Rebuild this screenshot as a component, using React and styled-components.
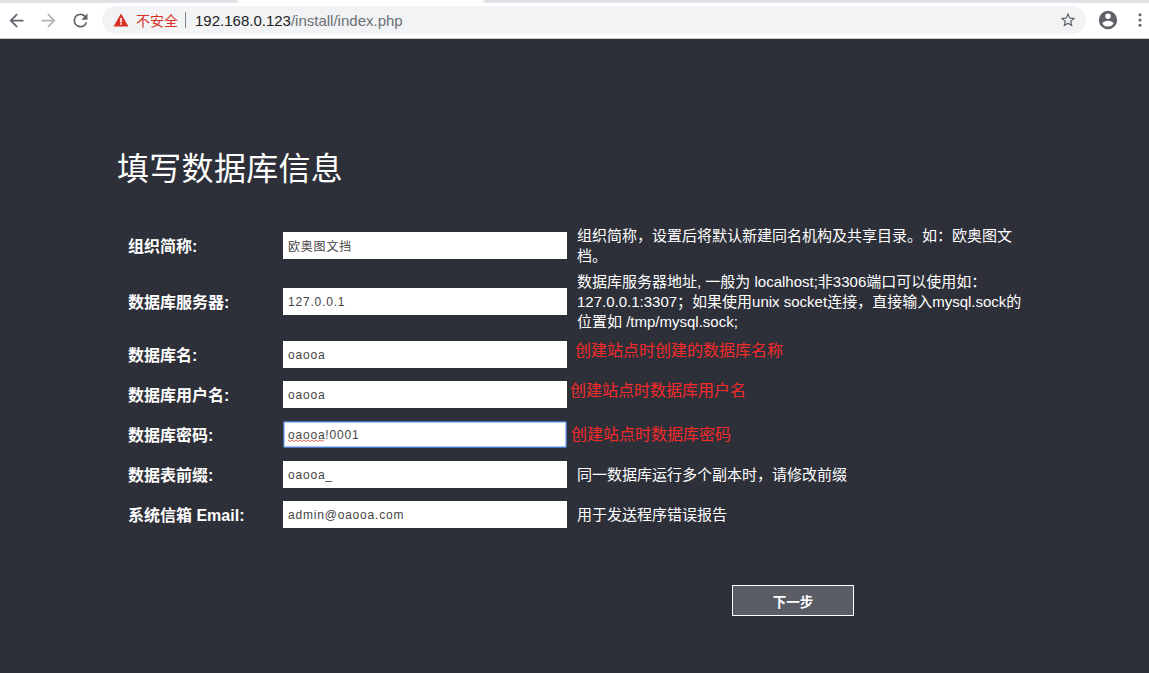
import React from "react";
import styled, { createGlobalStyle } from "styled-components";

const cjk = `"Liberation Sans", "Noto Sans CJK SC", sans-serif`;

const GlobalStyle = createGlobalStyle`
  html, body {
    margin: 0;
    padding: 0;
    height: 100%;
    background: #2e3039;
  }
  #root {
    height: 100%;
  }
`;

const Page = styled.div`
  width: 1149px;
  height: 673px;
  overflow: hidden;
  font-family: ${cjk};
  background: #2e3039;
`;

const TopStrip = styled.div`
  height: 3px;
  background: linear-gradient(
    to right,
    #dee1e6 0,
    #dee1e6 237px,
    #fff 239px,
    #fff 482px,
    #dee1e6 485px
  );
`;

const Toolbar = styled.div`
  height: 36px;
  background: #fff;
  border-bottom: 1px solid #c8cacd;
  box-sizing: border-box;
  display: flex;
  align-items: center;
  padding: 0 0 1px 4px;
`;

const NavButton = styled.div`
  flex: none;
  width: 24px;
  height: 24px;
  margin-left: ${(p) => p.$left || 0}px;
  display: flex;
  align-items: center;
  justify-content: center;
  color: ${(p) => p.$color || "#5f6368"};
`;

const Omnibox = styled.div`
  flex: none;
  width: 984px;
  height: 28px;
  margin-left: 10px;
  border-radius: 14px;
  background: #f1f3f4;
  display: flex;
  align-items: center;
  padding: 0 9px 0 11px;
  box-sizing: border-box;
`;

const NotSecure = styled.span`
  color: #d93025;
  font-size: 14px;
  margin-left: 7px;
`;

const Divider = styled.span`
  width: 1px;
  height: 16px;
  background: #80868b;
  margin: 0 9px 0 7px;
`;

const UrlHost = styled.span`
  color: #202124;
  font-size: 15px;
`;

const UrlPath = styled.span`
  color: #6b7074;
  font-size: 15px;
  flex: 1;
`;

const Main = styled.main`
  padding: 111px 0 0 118px;
`;

const Title = styled.h1`
  margin: 0 0 0 -1px;
  color: #fff;
  font-size: 32px;
  font-weight: 400;
  line-height: 38px;
  letter-spacing: 0.3px;
`;

const Form = styled.form`
  margin-top: 34px;
  display: flex;
  flex-direction: column;
`;

const Row = styled.div`
  display: flex;
  align-items: center;
  min-height: 40px;
  padding-left: 10px;
`;

const Label = styled.label`
  width: 155px;
  flex: none;
  color: #fff;
  font-size: 16px;
  font-weight: 700;
`;

const FieldWrap = styled.div`
  position: relative;
  flex: none;
  width: 284px;
  height: 27px;
`;

const Field = styled.input`
  display: block;
  width: 100%;
  height: 100%;
  box-sizing: border-box;
  border: ${(p) => (p.$focused ? "1px solid #4a78c8" : "none")};
  box-shadow: ${(p) => (p.$focused ? "inset 0 0 0 1px rgba(74, 120, 200, 0.45)" : "none")};
  border-radius: ${(p) => (p.$focused ? "2px" : "0")};
  padding: 1px ${(p) => (p.$focused ? "4px" : "5px")} 0;
  background: #fff;
  color: #444;
  font-family: ${cjk};
  font-size: 12px;
  letter-spacing: 0.8px;
  outline: none;
`;

const Squiggle = styled.svg`
  position: absolute;
  left: 5px;
  top: 18px;
`;

const Hint = styled.div`
  width: 446px;
  margin-left: 10px;
  padding: 4px 0 2px;
  color: #fff;
  font-size: 15px;
  line-height: 20px;
`;

const RedHint = styled.div`
  margin-left: ${(p) => p.$offset}px;
  margin-bottom: ${(p) => p.$lift}px;
  color: #f52a2a;
  font-size: 16px;
  line-height: 20px;
`;

const Actions = styled.div`
  display: flex;
  padding: 51px 0 0 614px;
`;

const NextButton = styled.button`
  width: 122px;
  height: 31px;
  background: #5a5d65;
  border: 1px solid #fff;
  color: #fff;
  font-family: ${cjk};
  font-size: 13.5px;
  font-weight: 700;
  padding: 0;
`;

const fields = [
  { label: "组织简称:", value: "欧奥图文挡", hint: "组织简称，设置后将默认新建同名机构及共享目录。如：欧奥图文档。" },
  {
    label: "数据库服务器:",
    value: "127.0.0.1",
    hint: "数据库服务器地址, 一般为 localhost;非3306端口可以使用如：127.0.0.1:3307；如果使用unix socket连接，直接输入mysql.sock的位置如 /tmp/mysql.sock;",
  },
  { label: "数据库名:", value: "oaooa", red: "创建站点时创建的数据库名称", offset: 8, lift: 6 },
  { label: "数据库用户名:", value: "oaooa", red: "创建站点时数据库用户名", offset: 3, lift: 6 },
  { label: "数据库密码:", value: "oaooa!0001", red: "创建站点时数据库密码", offset: 4, lift: -2, focused: true },
  { label: "数据表前缀:", value: "oaooa_", hint: "同一数据库运行多个副本时，请修改前缀" },
  { label: "系统信箱 Email:", value: "admin@oaooa.com", hint: "用于发送程序错误报告" },
];

export default function App() {
  return (
    <Page>
      <GlobalStyle />
      <TopStrip />
      <Toolbar>
        <NavButton>
          <svg width="21" height="21" viewBox="0 0 24 24" fill="currentColor">
            <path d="M20 11H7.83l5.59-5.59L12 4l-8 8 8 8 1.41-1.41L7.83 13H20v-2z" />
          </svg>
        </NavButton>
        <NavButton $left={8} $color="#b0b3b7">
          <svg width="21" height="21" viewBox="0 0 24 24" fill="currentColor">
            <path d="M12 4l-1.41 1.41L16.17 11H4v2h12.17l-5.58 5.59L12 20l8-8z" />
          </svg>
        </NavButton>
        <NavButton $left={8}>
          <svg width="21" height="21" viewBox="0 0 24 24" fill="currentColor">
            <path d="M17.65 6.35A7.96 7.96 0 0 0 12 4a8 8 0 1 0 7.73 10h-2.08A6 6 0 1 1 12 6c1.66 0 3.14.69 4.22 1.78L13 11h7V4l-2.35 2.35z" />
          </svg>
        </NavButton>
        <Omnibox>
          <svg width="16" height="16" viewBox="0 0 16 16">
            <path d="M8 1.5L15.5 14.5H.5z" fill="#d93025" />
            <rect x="7.2" y="6" width="1.6" height="4.5" fill="#fff" />
            <rect x="7.2" y="11.2" width="1.6" height="1.6" fill="#fff" />
          </svg>
          <NotSecure>不安全</NotSecure>
          <Divider />
          <UrlHost>192.168.0.123</UrlHost>
          <UrlPath>/install/index.php</UrlPath>
          <svg width="18" height="18" viewBox="0 0 24 24" fill="#5f6368">
            <path d="M22 9.24l-7.19-.62L12 2 9.19 8.63 2 9.24l5.46 4.73L5.82 21 12 17.27 18.18 21l-1.63-7.03L22 9.24zM12 15.4l-3.76 2.27 1-4.28-3.32-2.88 4.38-.38L12 6.1l1.71 4.04 4.38.38-3.32 2.88 1 4.28L12 15.4z" />
          </svg>
        </Omnibox>
        <NavButton $left={10}>
          <svg width="22" height="22" viewBox="0 0 24 24" fill="currentColor">
            <path d="M12 2a10 10 0 1 0 0 20 10 10 0 0 0 0-20zm0 3a3 3 0 1 1 0 6 3 3 0 0 1 0-6zm0 14.2a7.2 7.2 0 0 1-6-3.22c.03-1.99 4-3.08 6-3.08s5.97 1.09 6 3.08a7.2 7.2 0 0 1-6 3.22z" />
          </svg>
        </NavButton>
        <NavButton $left={8}>
          <svg width="18" height="18" viewBox="0 0 24 24" fill="currentColor">
            <circle cx="12" cy="5" r="2" />
            <circle cx="12" cy="12" r="2" />
            <circle cx="12" cy="19" r="2" />
          </svg>
        </NavButton>
      </Toolbar>
      <Main>
        <Title>填写数据库信息</Title>
        <Form>
          {fields.map((f) => (
            <Row key={f.label}>
              <Label>{f.label}</Label>
              <FieldWrap>
                <Field readOnly spellCheck={false} defaultValue={f.value} $focused={f.focused} />
                {f.focused && (
                  <Squiggle width="37" height="3" viewBox="0 0 37 3">
                    <path d="M0 1 L2 2.5 L4 1 L6 2.5 L8 1 L10 2.5 L12 1 L14 2.5 L16 1 L18 2.5 L20 1 L22 2.5 L24 1 L26 2.5 L28 1 L30 2.5 L32 1 L34 2.5 L36 1" fill="none" stroke="#e0403a" strokeWidth="0.8" />
                  </Squiggle>
                )}
              </FieldWrap>
              {f.red ? (
                <RedHint $offset={f.offset} $lift={f.lift}>{f.red}</RedHint>
              ) : (
                <Hint>{f.hint}</Hint>
              )}
            </Row>
          ))}
        </Form>
        <Actions>
          <NextButton type="button">下一步</NextButton>
        </Actions>
      </Main>
    </Page>
  );
}
